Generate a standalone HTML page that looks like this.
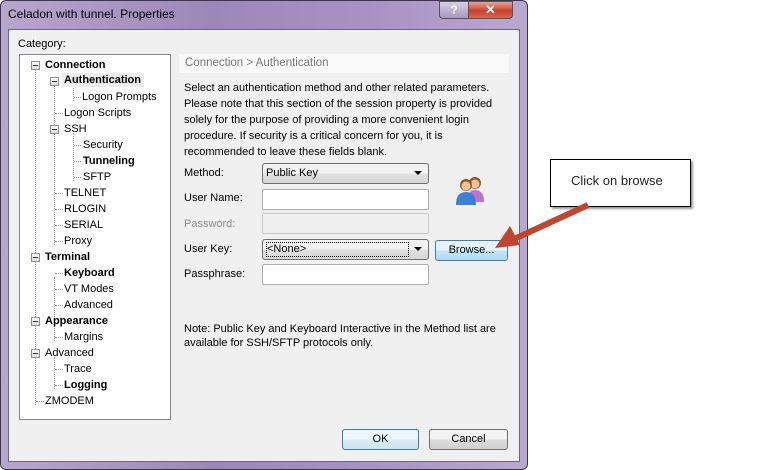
<!DOCTYPE html><html><head><style>
*{margin:0;padding:0;box-sizing:border-box}
body{width:773px;height:470px;background:#fff;position:relative;overflow:hidden;font-family:"Liberation Sans",sans-serif;font-size:11px;color:#000}
.a{position:absolute;white-space:nowrap}
.frame{left:0;top:0;width:528px;height:470px;border-radius:6px;background:linear-gradient(90deg,#b7a6cc,#9c88b8 40%,#a892c4 70%,#b9a9cf);border:1px solid #3b3550}
.client{left:8px;top:29px;width:512px;height:433px;background:#f0f0f0;border:1px solid #6d6480}
.tree{left:19px;top:54px;width:152px;height:366px;background:#fff;border:1px solid #828790}
.t{position:absolute;white-space:nowrap;font-size:11px}
.b{font-weight:bold}
.exp{position:absolute;width:9px;height:9px;border:1px solid #919191;background:linear-gradient(#fff,#ddd)}
.exp:after{content:"";position:absolute;left:1px;top:3px;width:5px;height:1px;background:#333}
.vl{position:absolute;border-left:1px dotted #999;width:0}
.hl{position:absolute;border-top:1px dotted #999;height:0}
.inp{position:absolute;height:21px;background:#fff;border:1px solid #abadb3;border-radius:2px}
.btn{position:absolute;height:21px;border:1px solid #707070;border-radius:3px;background:linear-gradient(#f2f2f2 50%,#dcdcdc 50%,#d0d0d0);text-align:center;line-height:19px;font-size:11px}
.arrow{position:absolute;right:6px;top:7px;width:0;height:0;border-left:4px solid transparent;border-right:4px solid transparent;border-top:4px solid #000}
</style></head><body>
<div class="a frame"></div>
<div class="a" style="left:8px;top:7px;font-size:12px;color:#000">Celadon with tunnel. Properties</div>
<div class="a" style="left:439px;top:1px;width:30px;height:18px;border:1px solid #555;border-radius:0 0 0 4px;background:linear-gradient(#d8cfe4,#a898bd);color:#fff;text-align:center;font-weight:bold;font-size:12px;line-height:16px">?</div>
<div class="a" style="left:468px;top:1px;width:45px;height:18px;border:1px solid #555;border-radius:0 0 4px 0;background:linear-gradient(#e8a598,#c8402c 55%,#d46a50);color:#fff;text-align:center;font-weight:bold;font-size:13px;line-height:16px">✕</div>
<div class="a client"></div>
<div class="a" style="left:18px;top:38px">Category:</div>
<div class="a tree">
<div class="vl" style="left:15px;top:14px;height:336px"></div>
<div class="vl" style="left:34px;top:30px;height:160px"></div>
<div class="vl" style="left:53px;top:30px;height:16px"></div>
<div class="vl" style="left:53px;top:78px;height:48px"></div>
<div class="vl" style="left:34px;top:222px;height:48px"></div>
<div class="vl" style="left:34px;top:270px;height:16px"></div>
<div class="vl" style="left:34px;top:302px;height:32px"></div>
<div class="exp" style="left:11px;top:6px"></div>
<div class="exp" style="left:30px;top:22px"></div>
<div class="exp" style="left:30px;top:70px"></div>
<div class="exp" style="left:11px;top:198px"></div>
<div class="exp" style="left:11px;top:262px"></div>
<div class="exp" style="left:11px;top:294px"></div>
<div class="hl" style="left:54px;top:42px;width:7px"></div>
<div class="hl" style="left:35px;top:58px;width:8px"></div>
<div class="hl" style="left:54px;top:90px;width:7px"></div>
<div class="hl" style="left:54px;top:106px;width:7px"></div>
<div class="hl" style="left:54px;top:122px;width:7px"></div>
<div class="hl" style="left:35px;top:138px;width:8px"></div>
<div class="hl" style="left:35px;top:154px;width:8px"></div>
<div class="hl" style="left:35px;top:170px;width:8px"></div>
<div class="hl" style="left:35px;top:186px;width:8px"></div>
<div class="hl" style="left:35px;top:218px;width:8px"></div>
<div class="hl" style="left:35px;top:234px;width:8px"></div>
<div class="hl" style="left:35px;top:250px;width:8px"></div>
<div class="hl" style="left:35px;top:282px;width:8px"></div>
<div class="hl" style="left:35px;top:314px;width:8px"></div>
<div class="hl" style="left:35px;top:330px;width:8px"></div>
<div class="hl" style="left:16px;top:346px;width:8px"></div>
<div class="t b" style="left:25px;top:4px">Connection</div>
<div class="t b" style="left:42px;top:18px;background:#ececec;padding:1px 3px 1px 2px">Authentication</div>
<div class="t" style="left:62px;top:36px">Logon Prompts</div>
<div class="t" style="left:44px;top:52px">Logon Scripts</div>
<div class="t" style="left:44px;top:68px">SSH</div>
<div class="t" style="left:63px;top:84px">Security</div>
<div class="t b" style="left:63px;top:100px">Tunneling</div>
<div class="t" style="left:63px;top:116px">SFTP</div>
<div class="t" style="left:44px;top:132px">TELNET</div>
<div class="t" style="left:44px;top:148px">RLOGIN</div>
<div class="t" style="left:44px;top:164px">SERIAL</div>
<div class="t" style="left:44px;top:180px">Proxy</div>
<div class="t b" style="left:25px;top:196px">Terminal</div>
<div class="t b" style="left:44px;top:212px">Keyboard</div>
<div class="t" style="left:44px;top:228px">VT Modes</div>
<div class="t" style="left:44px;top:244px">Advanced</div>
<div class="t b" style="left:25px;top:260px">Appearance</div>
<div class="t" style="left:44px;top:276px">Margins</div>
<div class="t" style="left:25px;top:292px">Advanced</div>
<div class="t" style="left:44px;top:308px">Trace</div>
<div class="t b" style="left:44px;top:324px">Logging</div>
<div class="t" style="left:25px;top:340px">ZMODEM</div>
</div>
<div class="a" style="left:179px;top:54px;width:330px;height:19px;background:#fafafa;color:#777;padding:3px 0 0 6px;font-size:11.5px">Connection &gt; Authentication</div>
<div class="a" style="left:184px;top:80px;line-height:16px;white-space:normal;width:320px">Select an authentication method and other related parameters.<br>Please note that this section of the session property is provided solely for the purpose of providing a more convenient login procedure. If security is a critical concern for you, it is recommended to leave these fields blank.</div>
<div class="a" style="left:184px;top:167px">Method:</div>
<div class="a" style="left:184px;top:192px">User Name:</div>
<div class="a" style="left:184px;top:218px;color:#8a8a8a">Password:</div>
<div class="a" style="left:184px;top:243px">User Key:</div>
<div class="a" style="left:184px;top:268px">Passphrase:</div>
<div class="btn" style="left:262px;top:163px;width:167px;text-align:left;padding-left:3px;background:linear-gradient(#f2f2f2 50%,#e2e2e2 50%,#d6d6d6)">Public Key<span class="arrow"></span></div>
<div class="inp" style="left:262px;top:189px;width:167px"></div>
<div class="inp" style="left:262px;top:213px;width:167px;background:#f0f0f0;border-color:#c8c8c8"></div>
<div class="btn" style="left:262px;top:239px;width:167px;text-align:left;padding-left:3px;background:linear-gradient(#f2f2f2 50%,#e2e2e2 50%,#d6d6d6)"><span style="display:inline-block;border:1px dotted #000;width:143px;height:15px;line-height:13px;margin-top:2px">&lt;None&gt;</span><span class="arrow"></span></div>
<div class="btn" style="left:435px;top:240px;width:73px;border-color:#3c7fb1;background:linear-gradient(#e5f4fc 50%,#c4e5f6 50%,#b0daf3)">Browse...</div>
<div class="inp" style="left:262px;top:264px;width:167px"></div>
<svg class="a" style="left:452px;top:172px" width="36" height="34" viewBox="0 0 36 34">
<circle cx="23" cy="11" r="6" fill="#8a5a2c"/><path d="M15 30 Q15 18 23 18 Q32 18 32 30Z" fill="#c070d0"/><circle cx="23" cy="12" r="4.5" fill="#f1c49c"/>
<circle cx="14" cy="13" r="6" fill="#8a5a2c"/><path d="M4 33 Q4 20 14 20 Q24 20 24 33Z" fill="#3b82d6"/><circle cx="14" cy="14" r="4.5" fill="#f1c49c"/>
</svg>
<div class="a" style="left:184px;top:322px;line-height:14px">Note: Public Key and Keyboard Interactive in the Method list are<br>available for SSH/SFTP protocols only.</div>
<div class="btn" style="left:342px;top:429px;width:77px;border-color:#3c7fb1;background:linear-gradient(#ecf6fc 50%,#dcecf6 50%,#cfe4f2)">OK</div>
<div class="btn" style="left:429px;top:429px;width:79px">Cancel</div>
<div class="a" style="left:550px;top:159px;width:141px;height:48px;border:1px solid #000;background:#fff;box-shadow:2px 2px 2px #999;font-size:13px;padding:13px 0 0 20px;color:#222">Click on browse</div>
<svg class="a" style="left:490px;top:200px" width="110" height="60" viewBox="0 0 110 60">
<line x1="98" y1="5" x2="22" y2="40" stroke="#c0452f" stroke-width="6"/>
<path d="M5 48 L20 26 L30 45Z" fill="#c0452f"/>
</svg>
</body></html>
